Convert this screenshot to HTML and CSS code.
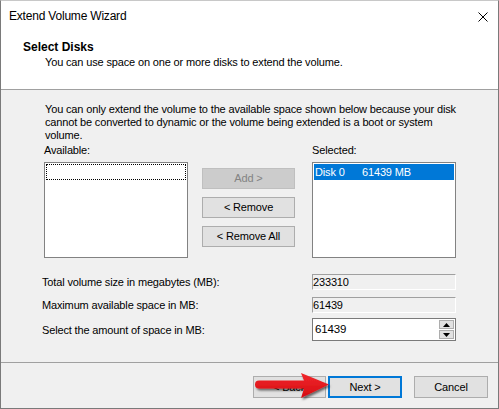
FILE: index.html
```html
<!DOCTYPE html>
<html>
<head>
<meta charset="utf-8">
<link rel="stylesheet" href="styles.css">
</head>
<body>
<div class="window">
  <div class="titlebar">
    <span class="title">Extend Volume Wizard</span>
    <span class="close">
      <svg width="10" height="10" viewBox="0 0 10 10"><path d="M0.5 0.5 L9.5 9.5 M9.5 0.5 L0.5 9.5" stroke="#000" stroke-width="1" fill="none"/></svg>
    </span>
  </div>
  <div class="header">
    <div class="h-title">Select Disks</div>
    <div class="h-sub">You can use space on one or more disks to extend the volume.</div>
  </div>
  <div class="body">
    <p class="intro">You can only extend the volume to the available space shown below because your disk<br>cannot be converted to dynamic or the volume being extended is a boot or system<br>volume.</p>
    <div class="lists">
      <div class="col">
        <div class="lbl">Available:</div>
        <div class="listbox"><div class="focus"></div></div>
      </div>
      <div class="btns">
        <div class="btn disabled">Add &gt;</div>
        <div class="btn">&lt; Remove</div>
        <div class="btn">&lt; Remove All</div>
      </div>
      <div class="col">
        <div class="lbl">Selected:</div>
        <div class="listbox"><div class="item"><span class="disk">Disk 0</span><span>61439 MB</span></div></div>
      </div>
    </div>
    <div class="fields">
      <div class="row r1"><span class="flabel">Total volume size in megabytes (MB):</span><span class="ro">233310</span></div>
      <div class="row r2"><span class="flabel">Maximum available space in MB:</span><span class="ro">61439</span></div>
      <div class="row r3"><span class="flabel">Select the amount of space in MB:</span>
        <span class="spin"><span class="val">61439</span>
          <span class="spinbtns">
            <span class="sb"><svg width="7" height="4" viewBox="0 0 7 4"><path d="M3.5 0 L7 4 L0 4 Z" fill="#000"/></svg></span>
            <span class="sb"><svg width="7" height="4" viewBox="0 0 7 4"><path d="M0 0 L7 0 L3.5 4 Z" fill="#000"/></svg></span>
          </span>
        </span>
      </div>
    </div>
  </div>
  <div class="footer">
    <div class="fbtn back">&lt; Back</div>
    <div class="fbtn next">Next &gt;</div>
    <div class="fbtn cancel">Cancel</div>
  </div>
  <svg class="arrow" width="80" height="34" viewBox="0 0 80 34">
    <defs>
      <filter id="sh" x="-20%" y="-30%" width="140%" height="160%">
        <feDropShadow dx="1.5" dy="2" stdDeviation="1.2" flood-color="#000" flood-opacity="0.55"/>
      </filter>
      <linearGradient id="rg" x1="0" y1="0" x2="0" y2="1">
        <stop offset="0" stop-color="#f2282c"/>
        <stop offset="1" stop-color="#d40c12"/>
      </linearGradient>
    </defs>
    <path d="M5 9.5 L50 9.5 L47 2 L75 13.5 L47 27 L50 17.5 L5 17.5 A4 4 0 0 1 5 9.5 Z" fill="url(#rg)" filter="url(#sh)"/>
  </svg>
</div>
</body>
</html>
```

FILE: styles.css
```css
html, body {
  margin: 0;
  padding: 0;
  background: #f0f0f0;
}
body {
  font-family: "Liberation Sans", Arial, sans-serif;
  font-size: 11px;
  letter-spacing: -0.15px;
  color: #000;
}
.window {
  position: relative;
  box-sizing: border-box;
  width: 499px;
  height: 409px;
  border: 1px solid #7a7a7a;
  border-top-color: #c8c8c8;
  background: #f0f0f0;
  display: flex;
  flex-direction: column;
  overflow: hidden;
}
.titlebar {
  height: 30px;
  background: #fff;
  display: flex;
  align-items: center;
  justify-content: space-between;
  padding-left: 8px;
  padding-right: 10px;
}
.title {
  font-size: 12px;
  letter-spacing: -0.2px;
  line-height: 30px;
}
.close {
  display: flex;
  width: 10px;
  height: 10px;
  margin-top: 1px;
}
.header {
  height: 58px;
  box-sizing: border-box;
  background: #fff;
  border-bottom: 1px solid #a0a0a0;
  height: 59px;
  padding: 9px 0 0 22px;
}
.h-title {
  font-weight: bold;
  font-size: 12px;
  letter-spacing: 0;
  line-height: 15px;
}
.h-sub {
  line-height: 15px;
  margin-left: 22px;
}
.body {
  flex: 1;
  padding: 13px 0 0 43px;
}
.intro {
  margin: 0;
  padding-left: 1px;
  line-height: 13px;
}
.lists {
  display: flex;
  align-items: flex-start;
  margin-top: 2px;
}
.col {
  width: 144px;
}
.lbl {
  line-height: 13px;
  margin-bottom: 5px;
}
.listbox {
  box-sizing: border-box;
  width: 144px;
  height: 96px;
  background: #fff;
  border: 1px solid #828282;
  padding: 1px;
}
.focus {
  height: 16px;
  box-sizing: border-box;
  border: 1px dotted #000;
}
.item {
  height: 16px;
  background: #0078d7;
  color: #fff;
  line-height: 16px;
  padding-left: 1px;
}
.disk {
  display: inline-block;
  width: 47px;
}
.btns {
  margin: 0 17px 0 14px;
  padding-top: 24px;
  display: flex;
  flex-direction: column;
  gap: 8px;
}
.btn {
  box-sizing: border-box;
  width: 93px;
  height: 21px;
  background: #e1e1e1;
  border: 1px solid #adadad;
  text-align: center;
  line-height: 19px;
}
.btn.disabled {
  background: #cccccc;
  border-color: #bfbfbf;
  color: #838383;
}
.fields {
  margin-top: 16px;
  margin-left: -2px;
}
.row {
  display: flex;
  align-items: center;
}
.r2 { margin-top: 7px; }
.r3 { margin-top: 5px; }
.flabel {
  width: 270px;
}
.ro {
  box-sizing: border-box;
  width: 144px;
  height: 16px;
  border-top: 1px solid #a0a0a0;
  border-left: 1px solid #a0a0a0;
  border-right: 1px solid #fff;
  border-bottom: 1px solid #fff;
  line-height: 14px;
  padding-left: 0px;
}
.spin {
  box-sizing: border-box;
  width: 144px;
  height: 23px;
  background: #fff;
  border: 1px solid #7a7a7a;
  display: flex;
  align-items: center;
  justify-content: space-between;
  padding: 1px 1px 1px 2px;
}
.val {
  line-height: 19px;
  font-size: 11.5px;
}
.spinbtns {
  display: flex;
  flex-direction: column;
  height: 19px;
  gap: 1px;
}
.sb {
  box-sizing: border-box;
  width: 15px;
  height: 9px;
  background: #e1e1e1;
  border: 1px solid #adadad;
  display: flex;
  align-items: center;
  justify-content: center;
}
.footer {
  height: 46px;
  box-sizing: border-box;
  border-top: 1px solid #a0a0a0;
  display: flex;
  justify-content: flex-end;
  align-items: flex-start;
  padding: 13px 10px 0 0;
}
.fbtn {
  box-sizing: border-box;
  width: 73px;
  height: 22px;
  background: #e1e1e1;
  border: 1px solid #adadad;
  text-align: center;
  line-height: 20px;
}
.fbtn.next {
  margin-left: 2px;
  width: 74px;
  border: 2px solid #0078d7;
  line-height: 18px;
}
.fbtn.cancel {
  margin-left: 12px;
  width: 74px;
}
.arrow {
  position: absolute;
  left: 253px;
  top: 370px;
}
```
